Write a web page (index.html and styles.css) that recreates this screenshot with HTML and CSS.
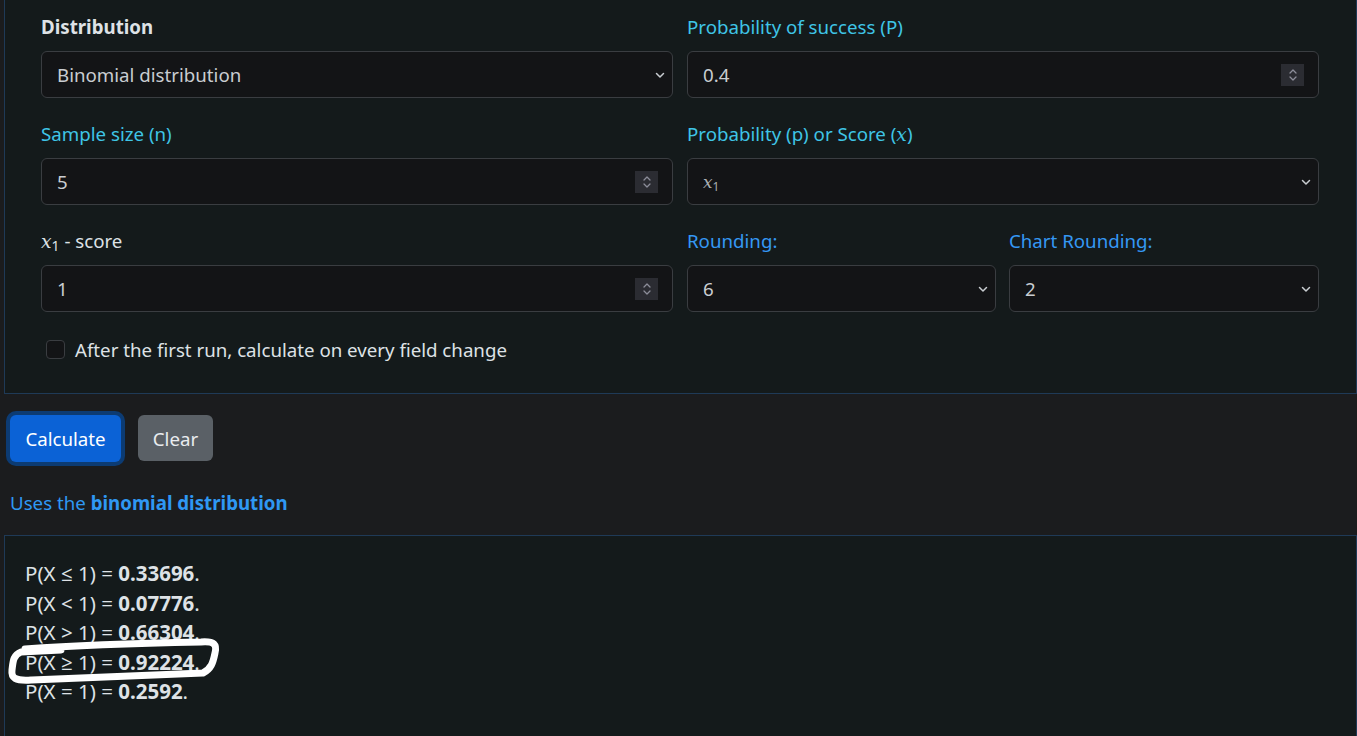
FILE: index.html
```html
<!DOCTYPE html>
<html>
<head>
<meta charset="utf-8">
<link rel="stylesheet" href="styles.css">
</head>
<body>
<div class="panel form-panel">
  <div class="grid">
    <div class="field">
      <div class="label label-strong">Distribution</div>
      <div class="control select">
        <span>Binomial distribution</span>
        <svg class="chev" width="10" height="8" viewBox="0 0 10 8"><path d="M1.5 2.5l3.5 3.5 3.5-3.5" fill="none" stroke="#c9cdd1" stroke-width="1.5" stroke-linecap="round" stroke-linejoin="round"/></svg>
      </div>
    </div>
    <div class="field">
      <div class="label label-info">Probability of success (P)</div>
      <div class="control">
        <span>0.4</span>
        <span class="spin"><svg width="10" height="14" viewBox="0 0 10 14"><path d="M2 5l3-3 3 3M2 9l3 3 3-3" fill="none" stroke="#8c8d99" stroke-width="1.3" stroke-linecap="round" stroke-linejoin="round"/></svg></span>
      </div>
    </div>
    <div class="field">
      <div class="label label-info">Sample size (n)</div>
      <div class="control">
        <span>5</span>
        <span class="spin"><svg width="10" height="14" viewBox="0 0 10 14"><path d="M2 5l3-3 3 3M2 9l3 3 3-3" fill="none" stroke="#8c8d99" stroke-width="1.3" stroke-linecap="round" stroke-linejoin="round"/></svg></span>
      </div>
    </div>
    <div class="field">
      <div class="label label-info">Probability (p) or Score (<i class="math">x</i>)</div>
      <div class="control select">
        <span class="dim"><i class="math">x</i><sub class="sub">1</sub></span>
        <svg class="chev" width="10" height="8" viewBox="0 0 10 8"><path d="M1.5 2.5l3.5 3.5 3.5-3.5" fill="none" stroke="#c9cdd1" stroke-width="1.5" stroke-linecap="round" stroke-linejoin="round"/></svg>
      </div>
    </div>
    <div class="field">
      <div class="label label-plain"><i class="math">x</i><sub class="sub sub-lbl">1</sub> - score</div>
      <div class="control">
        <span>1</span>
        <span class="spin"><svg width="10" height="14" viewBox="0 0 10 14"><path d="M2 5l3-3 3 3M2 9l3 3 3-3" fill="none" stroke="#8c8d99" stroke-width="1.3" stroke-linecap="round" stroke-linejoin="round"/></svg></span>
      </div>
    </div>
    <div class="subgrid">
      <div class="field">
        <div class="label label-blue">Rounding:</div>
        <div class="control select">
          <span>6</span>
          <svg class="chev" width="10" height="8" viewBox="0 0 10 8"><path d="M1.5 2.5l3.5 3.5 3.5-3.5" fill="none" stroke="#c9cdd1" stroke-width="1.5" stroke-linecap="round" stroke-linejoin="round"/></svg>
        </div>
      </div>
      <div class="field">
        <div class="label label-blue">Chart Rounding:</div>
        <div class="control select">
          <span>2</span>
          <svg class="chev" width="10" height="8" viewBox="0 0 10 8"><path d="M1.5 2.5l3.5 3.5 3.5-3.5" fill="none" stroke="#c9cdd1" stroke-width="1.5" stroke-linecap="round" stroke-linejoin="round"/></svg>
        </div>
      </div>
    </div>
  </div>
  <div class="check-row">
    <span class="checkbox"></span>
    <span class="check-text">After the first run, calculate on every field change</span>
  </div>
</div>

<div class="buttons">
  <button class="btn btn-primary">Calculate</button>
  <button class="btn btn-secondary">Clear</button>
</div>

<div class="uses">Uses the <b>binomial distribution</b></div>

<div class="panel results">
  <div class="line">P(X ≤ 1) = <b>0.33696</b>.</div>
  <div class="line">P(X &lt; 1) = <b>0.07776</b>.</div>
  <div class="line">P(X &gt; 1) = <b>0.66304</b>.</div>
  <div class="line">P(X ≥ 1) = <b>0.92224</b>.</div>
  <div class="line">P(X = 1) = <b>0.2592</b>.</div>
  <svg class="scribble" width="230" height="60" viewBox="0 0 230 60"><path d="M24 16 C 80 12, 150 10, 200 9 C 214 8, 216 12, 214 20 C 212 30, 210 36, 202 40 C 150 42, 90 45, 30 47 C 14 48, 10 45, 11 37 C 12 29, 12 22, 20 19 L 60 17" fill="none" stroke="#ffffff" stroke-width="7" stroke-linecap="round" stroke-linejoin="round"/></svg>
</div>
</body>
</html>
```

FILE: styles.css
```css
* { box-sizing: border-box; }
html, body { margin: 0; padding: 0; }
body {
  background: #1b1c1e;
  color: #dee2e6;
  font-family: "Noto Sans", "Open Sans", sans-serif;
  font-size: 18.7px;
  width: 1357px;
  height: 736px;
  overflow: hidden;
}
.panel {
  background: #141a1b;
  border: 1px solid #1f3a57;
  margin-left: 4px;
  width: 1353px;
}
.form-panel {
  border-top: none;
  padding: 15px 36px 0 36px;
  height: 394px;
}
.grid {
  display: grid;
  grid-template-columns: 632px 632px;
  column-gap: 14px;
  row-gap: 24px;
}
.subgrid {
  display: grid;
  grid-template-columns: 309px 310px;
  column-gap: 13px;
}
.label {
  line-height: 24px;
  height: 24px;
  margin-bottom: 12px;
  font-size: 18.7px;
  white-space: nowrap;
}
.label-strong { font-weight: 700; color: #dee2e6; }
.label-info { color: #3fc5e6; }
.label-blue { color: #3598f4; }
.label-plain { color: #dee2e6; }
.math { font-family: "DejaVu Serif", "Liberation Serif", serif; font-style: italic; }
.sub { font-size: 12px; vertical-align: -3px; line-height: 0; }
.sub-lbl { font-size: 14px; font-family: "Noto Sans", sans-serif; }
.control {
  height: 47px;
  background: #131416;
  border: 1px solid #3a3d41;
  border-radius: 6px;
  display: flex;
  align-items: center;
  justify-content: space-between;
  padding: 0 14px 0 15px;
  font-size: 18.7px;
  color: #c9cdd1;
}
.control.select { padding-right: 7px; }
.dim { color: #a9adb2; font-size: 17px; }
.chev { flex: none; }
.spin {
  width: 23px;
  height: 22px;
  background: #2b2c32;
  display: flex;
  align-items: center;
  justify-content: center;
}
.check-row {
  display: flex;
  align-items: center;
  margin-top: 25px;
  padding-left: 5px;
}
.checkbox {
  width: 19px;
  height: 19px;
  border: 1px solid #3a3d41;
  border-radius: 4px;
  background: #131416;
  margin-right: 10px;
}
.check-text { font-size: 18.7px; color: #dee2e6; }
.buttons {
  display: flex;
  gap: 17px;
  padding: 21px 0 0 10px;
  height: 91px;
}
.btn {
  font-family: inherit;
  font-size: 18.7px;
  border: none;
  border-radius: 6px;
  height: 47px;
  padding: 0;
  color: #ffffff;
}
.btn-primary {
  background: #0b62d6;
  box-shadow: 0 0 0 4px #0c3b73;
  width: 111px;
}
.btn-secondary {
  background: #5a6066;
  width: 75px;
  color: #e9ecef;
  height: 46px;
}
.uses {
  padding-left: 10px;
  color: #2f98f3;
  font-size: 18.7px;
  line-height: 24px;
  height: 50px;
  padding-top: 6px;
}
.uses b { color: #2f98f3; }
.results {
  position: relative;
  border-bottom: none;
  padding: 23px 20px 0 20px;
  height: 210px;
}
.line {
  font-size: 20.5px;
  line-height: 29.5px;
  color: #dee2e6;
}
.line b { font-weight: 700; }
.scribble {
  position: absolute;
  left: -4px;
  top: 97px;
}
```
